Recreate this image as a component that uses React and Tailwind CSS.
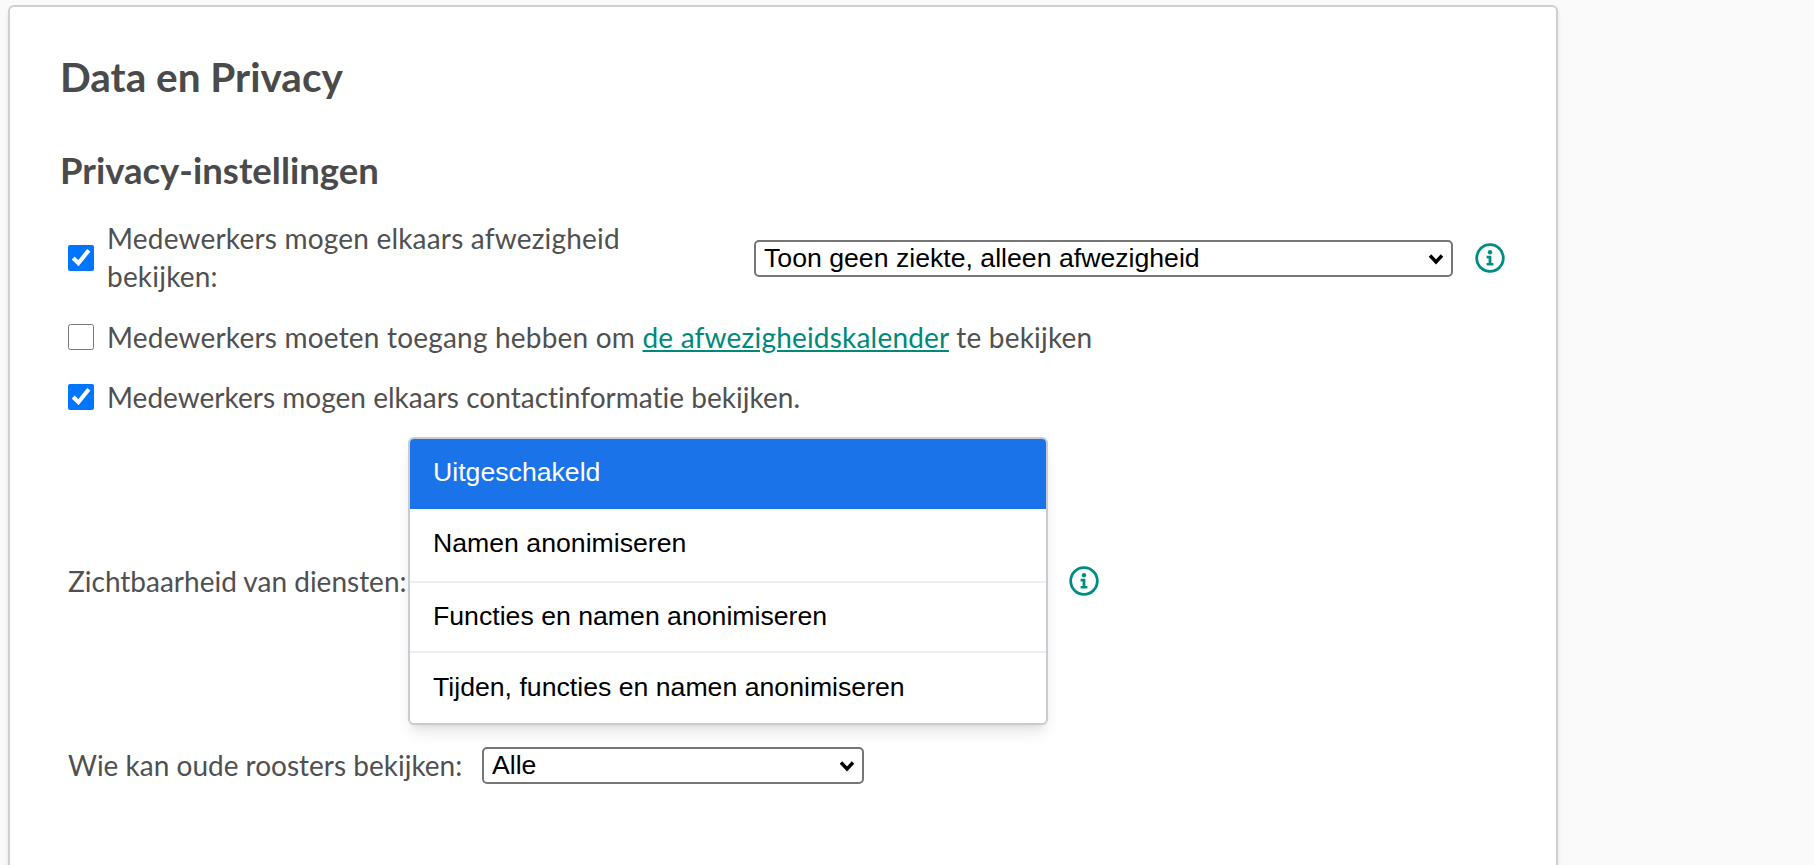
const labelFont = "font-['Lato','Open_Sans',sans-serif]"

function InfoIcon() {
  return (
    <svg width="30" height="30" viewBox="0 0 30 30" fill="none" className="shrink-0">
      <circle cx="15" cy="15" r="13.3" stroke="#008c84" strokeWidth="2.8" />
      <circle cx="15" cy="9.2" r="2.2" fill="#008c84" />
      <path d="M11.6 12.8h4.8v7.2h2v2.6h-6.8V20h2v-4.6h-2z" fill="#008c84" />
    </svg>
  )
}

function Check({ checked }) {
  return <input type="checkbox" defaultChecked={checked} className="w-[26px] h-[26px] m-0 shrink-0" />
}

function Select({ width, children }) {
  return (
    <div className={`relative shrink-0 ${width}`}>
      <select className="block w-full h-[37px] appearance-none border-2 border-[#767676] rounded-[5px] pl-[8px] text-[26.67px] leading-[33px] text-black font-['Liberation_Sans',sans-serif]">
        <option>{children}</option>
      </select>
      <svg width="16" height="12" viewBox="0 0 16 12" fill="none" className="absolute right-[9px] top-[13px] pointer-events-none">
        <path d="M2 2.5l6 6.5 6-6.5" stroke="#000" strokeWidth="3.4" />
      </svg>
    </div>
  )
}

const options = [
  { label: 'Namen anonimiseren', cls: 'h-[74px] pb-[4px] border-b-2 border-[#eeeef2]' },
  { label: 'Functies en namen anonimiseren', cls: 'h-[70px] pb-[2px] border-b-2 border-[#eeeef2]' },
  { label: 'Tijden, functies en namen anonimiseren', cls: 'h-[70px] pb-[3px]' },
]

export default function App() {
  return (
    <div className="h-[865px] overflow-hidden bg-[#fafafa]">
      <div className={`ml-[8px] mt-[5px] w-[1550px] h-[900px] bg-white border-2 border-[#cfcfcf] rounded-md shadow-md pl-[50px] text-[#4a4a4a] ${labelFont}`}>
        <h1 className="mt-[46px] text-[40.5px] leading-[48px] font-bold">Data en Privacy</h1>
        <h2 className="mt-[47px] text-[36.5px] leading-[44px] font-bold">Privacy-instellingen</h2>

        <div className="pl-[8px] text-[28px] leading-[38px] text-[#505050]">
          <div className="mt-[28px] h-[76px] flex items-center">
            <Check checked />
            <span className="ml-[13px] -mt-[3px] w-[647px] tracking-[0.2px]">
              Medewerkers mogen elkaars afwezigheid<br />bekijken:
            </span>
            <Select width="w-[699px]">Toon geen ziekte, alleen afwezigheid</Select>
            <span className="ml-[22px]"><InfoIcon /></span>
          </div>

          <div className="mt-[22px] flex items-center">
            <Check />
            <span className="ml-[13px] tracking-[0.2px]">
              Medewerkers moeten toegang hebben om <a href="#" className="text-[#00897b] underline">de afwezigheidskalender</a> te bekijken
            </span>
          </div>

          <div className="mt-[22px] flex items-center">
            <Check checked />
            <span className="ml-[13px] tracking-[0.02px]">Medewerkers mogen elkaars contactinformatie bekijken.</span>
          </div>

          <div className="mt-[21px] flex items-center">
            <span className="w-[340px] shrink-0 whitespace-nowrap">Zichtbaarheid van diensten:</span>
            <div className="w-[640px] shrink-0 border-2 border-[#c8ccd2] rounded-md bg-white shadow-lg overflow-hidden text-black text-[26.67px] leading-[36px] font-['Liberation_Sans',sans-serif]">
              <div className="h-[70px] flex items-center px-[23px] pb-[5px] bg-[#1a73e8] text-white">Uitgeschakeld</div>
              {options.map(o => (
                <div key={o.label} className={`flex items-center px-[23px] ${o.cls}`}>{o.label}</div>
              ))}
            </div>
            <span className="ml-[21px]"><InfoIcon /></span>
          </div>

          <div className="mt-[21px] flex items-center">
            <span className="w-[414px] shrink-0 whitespace-nowrap">Wie kan oude roosters bekijken:</span>
            <Select width="w-[382px]">Alle</Select>
          </div>
        </div>
      </div>
    </div>
  )
}
